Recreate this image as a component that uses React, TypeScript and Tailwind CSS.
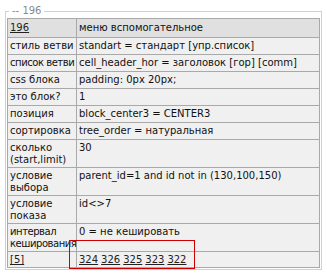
import React from "react";

const rows: { label: string[]; value: React.ReactNode; tight?: boolean }[] = [
  { label: ["стиль ветви"], value: "standart = стандарт [упр.список]" },
  { label: ["список ветви"], value: "cell_header_hor = заголовок [гор] [comm]", tight: true },
  { label: ["css блока"], value: "padding: 0px 20px;" },
  { label: ["это блок?"], value: "1" },
  { label: ["позиция"], value: "block_center3 = CENTER3" },
  { label: ["сортировка"], value: "tree_order = натуральная" },
  { label: ["сколько", "(start,limit)"], value: "30" },
  { label: ["условие", "выбора"], value: "parent_id=1 and id not in (130,100,150)" },
  { label: ["условие", "показа"], value: "id<>7" },
  { label: ["интервал", "кеширования"], value: "0 = не кешировать", tight: true },
];

const links = ["324", "326", "325", "323", "322"];

export default function App() {
  return (
    <div
      className="relative h-[273px] w-[327px] overflow-hidden bg-white pt-[5px] pl-[5px] text-[10px] leading-[12px] text-[#111]"
      style={{ fontFamily: '"DejaVu Sans", Verdana, sans-serif' }}
    >
      <fieldset className="w-[317px] border border-[#d0d0d0] px-[1px] pb-[1px]">
        <legend className="ml-[2px] px-[3px] text-[#8a8a8a]">-- 196</legend>
        <table className="w-full table-fixed border-collapse border border-[#a9a9a9] mt-[1px]">
          <colgroup>
            <col className="w-[69px]" />
            <col />
          </colgroup>
          <tbody>
            <tr className="bg-[#e0e0e0]">
              <td className="border border-[#a9a9a9] px-[2px] py-[3px] align-top">
                <a className="underline text-[#222]">196</a>
              </td>
              <td className="border border-[#a9a9a9] px-[2px] py-[3px] align-top">меню вспомогательное</td>
            </tr>
            {rows.map((r, i) => {
              const pad = r.label.length > 1 ? "pt-[2px] pb-[1px]" : "py-[2px]";
              return (
                <tr key={i} className="bg-[#f0f0f0]">
                  <td
                    className={`border border-[#a9a9a9] px-[2px] ${pad} align-top whitespace-nowrap ${
                      r.tight ? "tracking-[-0.45px]" : ""
                    }`}
                  >
                    {r.label.map((l, j) => (
                      <div key={j}>{l}</div>
                    ))}
                  </td>
                  <td className={`border border-[#a9a9a9] px-[2px] ${pad} align-top whitespace-nowrap`}>
                    {r.value}
                  </td>
                </tr>
              );
            })}
            <tr className="bg-[#f0f0f0]">
              <td className="border border-[#a9a9a9] px-[2px] pt-[2px] pb-[1px] align-top">
                <a className="underline text-[#222]">[5]</a>
              </td>
              <td className="border border-[#a9a9a9] px-[2px] pt-[2px] pb-[1px] align-top">
                <div className="flex gap-[3px]">
                  {links.map((l) => (
                    <a key={l} className="underline text-[#222]">
                      {l}
                    </a>
                  ))}
                </div>
              </td>
            </tr>
          </tbody>
        </table>
      </fieldset>
      <div className="absolute left-[69px] top-[240px] h-[29px] w-[126px] border border-[#cc0000]" />
    </div>
  );
}
